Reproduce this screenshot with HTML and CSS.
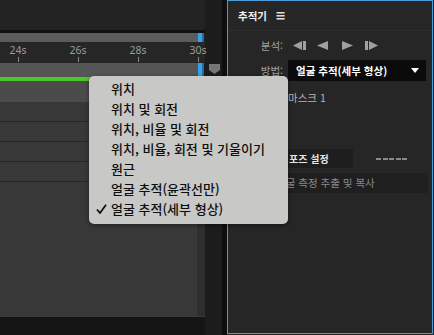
FILE: index.html
```html
<!DOCTYPE html>
<html lang="ko">
<head>
    <meta charset="UTF-8">
    <title>추적기</title>
    <link rel="stylesheet" href="styles.css">
</head>
<body>
    <div class="screen">
        <div class="timeline">
            <div class="tl-top"></div>
            <div class="track work">
                <div class="bar"></div>
                <div class="handle"></div>
            </div>
            <div class="ruler">
                <div class="ruler-inner">
                    <div class="tick"><span>24s</span><i></i></div>
                    <div class="tick"><span>26s</span><i></i></div>
                    <div class="tick"><span>28s</span><i></i></div>
                    <div class="tick"><span>30s</span><i></i></div>
                </div>
            </div>
            <div class="track cti">
                <div class="bar"></div>
                <div class="handle"></div>
                <div class="head"></div>
            </div>
            <div class="layers">
                <div class="layer active"></div>
                <div class="layer"></div>
                <div class="layer"></div>
                <div class="layer"></div>
                <div class="layer"></div>
                <div class="layer fill"></div>
            </div>
            <div class="tl-bottom"></div>
        </div>
        <div class="gutter"></div>

        <div class="panel">
            <div class="panel-head">
                <span class="title">추적기</span>
                <span class="menu-icon">&#9776;</span>
            </div>
            <div class="row analyze">
                <span class="label">분석:</span>
                <div class="controls">
                    <svg class="ctl" width="14" height="9" viewBox="0 0 14 9"><polygon points="0,4.5 9,0 9,9"/><rect x="10" y="0" width="3" height="9"/></svg>
                    <svg class="ctl" width="11" height="9" viewBox="0 0 11 9"><polygon points="0,4.5 11,0 11,9"/></svg>
                    <svg class="ctl" width="11" height="9" viewBox="0 0 11 9"><polygon points="11,4.5 0,0 0,9"/></svg>
                    <svg class="ctl" width="14" height="9" viewBox="0 0 14 9"><rect x="1" y="0" width="3" height="9"/><polygon points="14,4.5 5,0 5,9"/></svg>
                </div>
            </div>
            <div class="row method">
                <span class="label">방법:</span>
                <div class="select">
                    <span>얼굴 추적(세부 형상)</span>
                    <svg width="8" height="5" viewBox="0 0 8 5"><polygon points="0,0 8,0 4,5" fill="#fff"/></svg>
                </div>
            </div>
            <div class="row mask">
                <span class="label"></span>
                <span class="mask-name">마스크 1</span>
            </div>
            <div class="pose">
                <div class="pose-btn">포즈 설정</div>
                <div class="dashes"></div>
            </div>
            <div class="copy-btn">얼굴 측정 추출 및 복사</div>
        </div>

        <div class="menu">
            <div class="item">위치</div>
            <div class="item">위치 및 회전</div>
            <div class="item">위치, 비율 및 회전</div>
            <div class="item">위치, 비율, 회전 및 기울이기</div>
            <div class="item">원근</div>
            <div class="item">얼굴 추적(윤곽선만)</div>
            <div class="item checked">
                <svg class="check" width="11" height="10" viewBox="0 0 11 10"><path d="M1 5.5 L4 9 L10 0.8" fill="none" stroke="#111" stroke-width="1.8"/></svg>
                얼굴 추적(세부 형상)
            </div>
        </div>
    </div>
</body>
</html>
```

FILE: styles.css
```css
body {
    margin: 0;
    background-color: #232323;
    font-family: "Noto Sans CJK KR", "Noto Sans", sans-serif;
}
.screen {
    position: relative;
    display: flex;
    width: 434px;
    height: 335px;
    overflow: hidden;
}

/* timeline */
.timeline {
    width: 222px;
    display: flex;
    flex-direction: column;
    background-color: #1c1c1c;
}
.tl-top {
    height: 30px;
    width: 205px;
    background-color: #232323;
}
.track {
    display: flex;
    flex-shrink: 0;
}
.work {
    width: 205px;
    height: 12px;
    box-sizing: border-box;
    border-top: 3px solid #111;
    background-color: #232323;
}
.bar {
    width: 198px;
    background-color: #5c5c5c;
}
.handle {
    width: 6px;
    background-color: #38a2e4;
    box-shadow: inset -2px 0 0 #1d6fa3;
}
.ruler {
    width: 205px;
    height: 21px;
    background-color: #262626;
    flex-shrink: 0;
}
.ruler-inner {
    display: flex;
    margin-left: -12px;
}
.tick {
    width: 60px;
    flex-shrink: 0;
    display: flex;
    flex-direction: column;
    align-items: center;
    padding-top: 2px;
}
.tick:first-child span {
    margin-left: 0;
}
.tick span {
    font-family: "Noto Sans", sans-serif;
    font-size: 10.5px;
    line-height: 13px;
    color: #9c9c9c;
}
.tick i {
    width: 1px;
    height: 5px;
    background-color: #8a8a8a;
}
.cti {
    height: 14px;
}
.cti .bar {
    background-color: #555;
}
.head {
    width: 11px;
    height: 10px;
    margin: 1px 0 0 5px;
    background-color: #767676;
    clip-path: polygon(0 0, 100% 0, 100% 60%, 50% 100%, 0 60%);
}
.layers {
    flex: 1;
    width: 205px;
    box-sizing: border-box;
    border-right: 8px solid #2e2e2e;
    display: flex;
    flex-direction: column;
}
.layer {
    height: 20px;
    box-sizing: border-box;
    border-bottom: 1px solid #262626;
    background-color: #383838;
}
.layer.active {
    height: 25px;
    border-top: 4px solid #4cc82c;
    border-bottom: none;
    background-color: #4b4b4b;
}
.layer.fill {
    flex: 1;
    border-bottom: none;
}
.tl-bottom {
    height: 19px;
    width: 205px;
    background-color: #151515;
    border-top: 1px solid #3a3a3a;
    box-sizing: border-box;
}
.gutter {
    width: 5px;
    background-color: #0e0e0e;
}

/* tracker panel */
.panel {
    width: 206px;
    height: 334px;
    box-sizing: border-box;
    border: 1px solid #4a9bd8;
    background-color: #262626;
    font-size: 10.5px;
}
.panel-head {
    height: 29px;
    display: flex;
    align-items: center;
    gap: 9px;
    padding-left: 10px;
    border-bottom: 1px solid #2e2e2e;
}
.title {
    color: #f0f0f0;
    font-weight: bold;
}
.menu-icon {
    color: #ddd;
    font-size: 9px;
}
.row {
    display: flex;
    align-items: center;
}
.label {
    width: 60px;
    flex-shrink: 0;
    box-sizing: border-box;
    padding-right: 5px;
    text-align: right;
    color: #a3a3a3;
}
.analyze {
    height: 11px;
    margin-top: 9px;
}
.controls {
    display: flex;
    align-items: center;
    padding-left: 5px;
}
.ctl {
    fill: #a0a0a0;
    margin-right: 10px;
}
.ctl:nth-child(2) {
    margin-right: 14px;
}
.ctl:nth-child(3) {
    margin-right: 11px;
}
.method {
    margin-top: 9px;
}
.select {
    width: 138px;
    height: 21px;
    box-sizing: border-box;
    padding: 0 7px 0 8px;
    display: flex;
    align-items: center;
    justify-content: space-between;
    background-color: #0b0b0b;
    color: #fff;
    font-weight: bold;
}
.mask {
    height: 16px;
    margin-top: 8px;
}
.mask-name {
    color: #b4b4b4;
}
.pose {
    display: flex;
    align-items: center;
    margin-top: 44px;
    padding-left: 38px;
}
.pose-btn {
    width: 87px;
    height: 19px;
    box-sizing: border-box;
    padding-left: 23px;
    line-height: 19px;
    background-color: #1e1e1e;
    color: #e6e6e6;
    font-weight: bold;
    font-size: 10px;
}
.dashes {
    width: 31px;
    height: 2px;
    margin-left: 23px;
    background: repeating-linear-gradient(90deg, #8a8a8a 0 5px, transparent 5px 6.5px);
}
.copy-btn {
    margin: 5px 0 0 38px;
    width: 162px;
    height: 20px;
    box-sizing: border-box;
    padding-left: 10px;
    line-height: 20px;
    background-color: #1f1f1f;
    color: #8a8a8a;
}

/* dropdown list */
.menu {
    position: absolute;
    left: 89px;
    top: 76px;
    width: 199px;
    height: 148px;
    box-sizing: border-box;
    padding: 3px 0;
    border-radius: 5px;
    background-color: #c8c9c7;
    box-shadow: 0 1px 4px rgba(0, 0, 0, 0.45);
}
.item {
    position: relative;
    height: 20px;
    line-height: 20px;
    padding-left: 22px;
    font-size: 13px;
    font-weight: 500;
    color: #0e0e0e;
}
.check {
    position: absolute;
    left: 7px;
    top: 5px;
}
```
